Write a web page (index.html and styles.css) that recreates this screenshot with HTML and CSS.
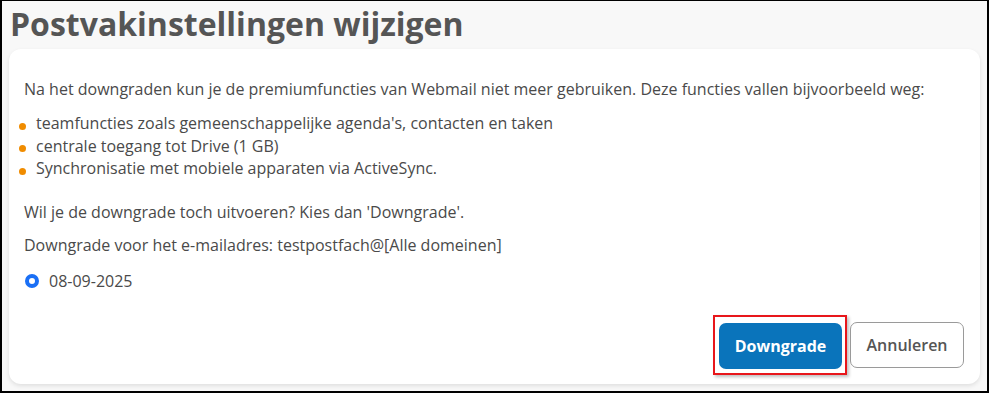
FILE: index.html
```html
<!DOCTYPE html>
<html lang="nl">
<head>
<meta charset="utf-8">
<title>Postvakinstellingen wijzigen</title>
<link rel="stylesheet" href="styles.css">
</head>
<body>
<div class="frame">
  <h1 class="title">Postvakinstellingen wijzigen</h1>
  <div class="card">
    <p class="intro">Na het downgraden kun je de premiumfuncties van Webmail niet meer gebruiken. Deze functies vallen bijvoorbeeld weg:</p>
    <ul class="features">
      <li>teamfuncties zoals gemeenschappelijke agenda's, contacten en taken</li>
      <li>centrale toegang tot Drive (1 GB)</li>
      <li>Synchronisatie met mobiele apparaten via ActiveSync.</li>
    </ul>
    <p class="confirm">Wil je de downgrade toch uitvoeren? Kies dan 'Downgrade'.</p>
    <p class="address">Downgrade voor het e-mailadres: testpostfach@[Alle domeinen]</p>
    <label class="radio-row"><span class="radio"></span><span>08-09-2025</span></label>
    <div class="actions">
      <span class="highlight"><button class="btn btn-primary">Downgrade</button></span>
      <button class="btn btn-secondary">Annuleren</button>
    </div>
  </div>
</div>
</body>
</html>
```
FILE: styles.css
```css
html, body {
  margin: 0;
  padding: 0;
}
body {
  font-family: "Open Sans", "Liberation Sans", sans-serif;
  color: #4f4f4f;
}
.frame {
  box-sizing: border-box;
  width: 989px;
  height: 393px;
  border-style: solid;
  border-color: #000;
  border-width: 1px 2px 2px 2px;
  background: #f8f8f8;
  display: flex;
  flex-direction: column;
}
.title {
  margin: 0;
  padding: 0 0 0 8px;
  font-size: 32px;
  line-height: 46px;
  font-weight: 700;
  color: #555555;
  letter-spacing: 0;
}
.card {
  flex: 1;
  margin: 2px 7px 7px 7px;
  background: #fff;
  border-radius: 12px;
  box-shadow: 0 2px 4px rgba(0,0,0,0.10);
  padding: 29px 16px 9px 15px;
  display: flex;
  flex-direction: column;
  font-size: 16px;
  line-height: 22px;
  color: #4a4a4a;
}
.card p {
  margin: 0;
}
.features {
  list-style: none;
  margin: 12px 0 0 0;
  padding: 0;
  line-height: 22.5px;
}
.features li {
  display: flex;
  align-items: center;
  gap: 10px;
}
.features li::before {
  content: "";
  width: 7px;
  height: 7px;
  border-radius: 50%;
  background: #f08c00;
  margin: 6px 0 0 -5px;
  flex: none;
}
.confirm {
  margin-top: 21px !important;
}
.address {
  margin-top: 11px !important;
}
.radio-row {
  margin-top: 14px;
  display: flex;
  align-items: center;
  gap: 10px;
  padding-left: 1px;
}
.radio {
  box-sizing: border-box;
  width: 14px;
  height: 14px;
  border-radius: 50%;
  border: 4px solid #1a6ff5;
  background: #fff;
}
.actions {
  margin-top: auto;
  display: flex;
  justify-content: flex-end;
  align-items: center;
  gap: 3px;
}
.highlight {
  display: flex;
  border: 2px solid #e8161b;
  padding: 6px 3px 4px 4px;
  box-shadow: 2px 2px 3px rgba(0,0,0,0.25);
}
.btn {
  font-family: "Open Sans", "Liberation Sans", sans-serif;
  font-size: 16px;
  height: 46px;
  border-radius: 7px;
  cursor: pointer;
}
.btn-primary {
  width: 123px;
  background: #0a74bb;
  color: #fff;
  border: none;
  font-weight: 700;
}
.btn-secondary {
  width: 114px;
  background: #fff;
  color: #555;
  border: 1px solid #9a9a9a;
  font-weight: 600;
}
```
